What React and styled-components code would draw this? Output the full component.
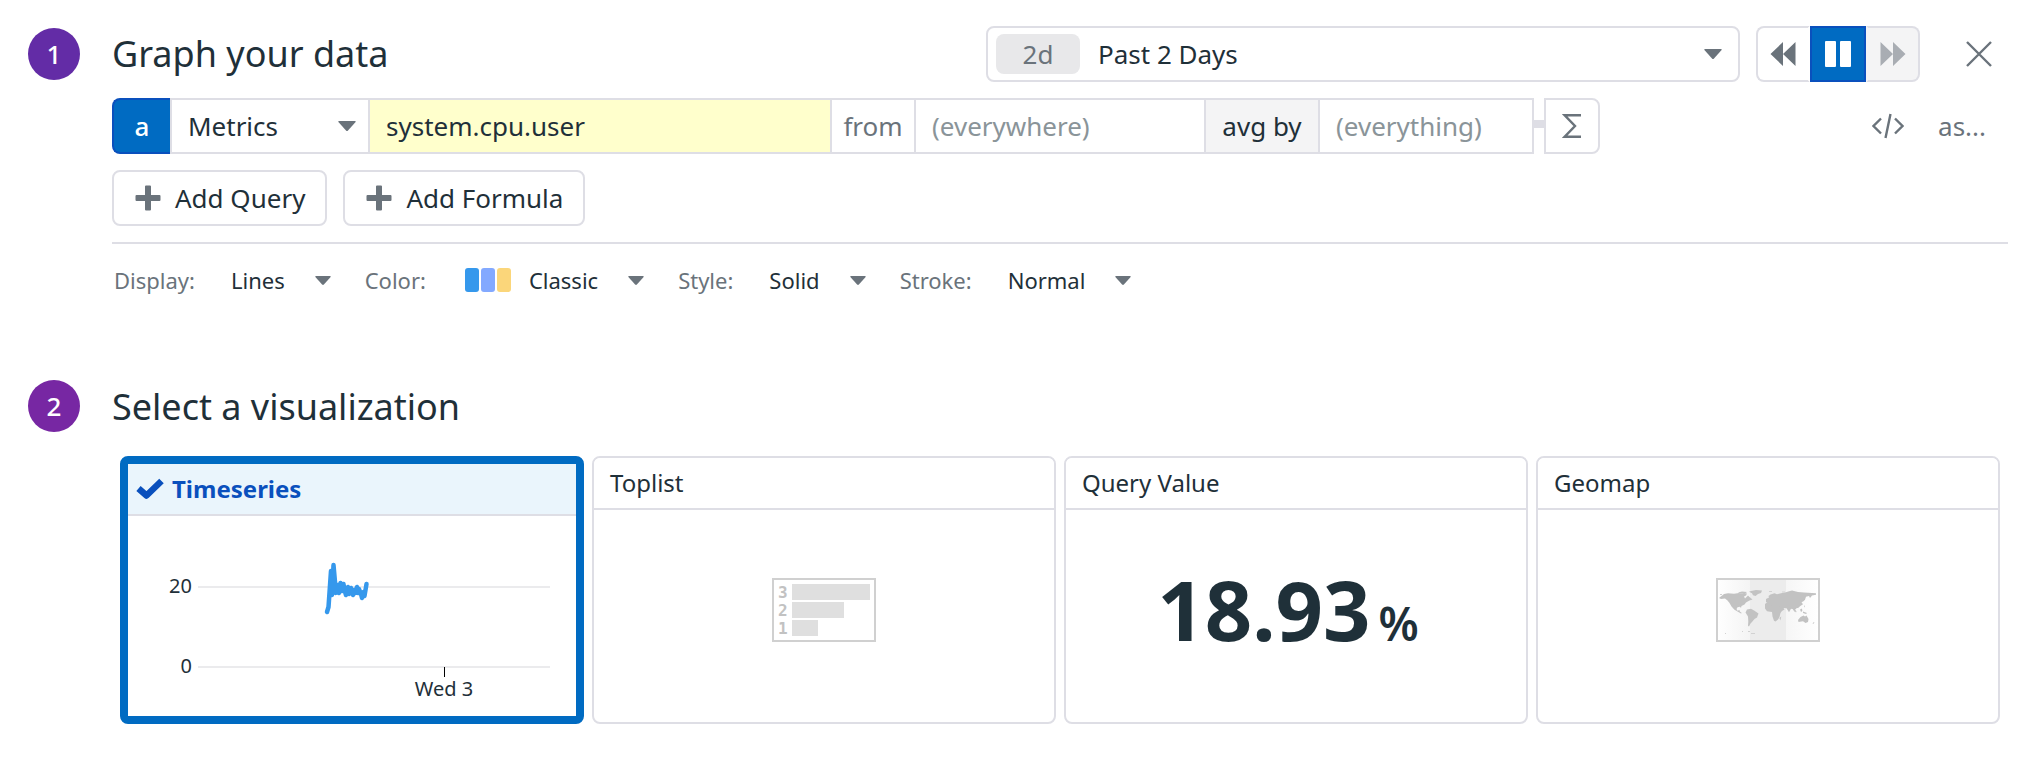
import React from "react";
import styled, { createGlobalStyle, css } from "styled-components";

const c = {
  text: "#1f3039",
  muted: "#6a737b",
  faint: "#8a9499",
  line: "#dedee5",
  blue: "#006bc2",
  deep: "#0a50bd",
  shade: "#f4f4f5",
};

const Global = createGlobalStyle`
  *, *::before, *::after { box-sizing: border-box; }
  body { margin: 0; background: #fff; }
  body, button, input, select { font-family: "Noto Sans", "Open Sans", sans-serif; color: ${c.text}; }
  svg { display: block; flex: none; }
`;

const Page = styled.main`
  padding: 26px 20px 40px 28px;
`;

const Section = styled.section`
  display: grid;
  grid-template-columns: 52px minmax(0, 1fr);
  column-gap: 32px;
  margin-bottom: ${(p) => (p.$spaced ? "60px" : "0")};
`;

const StepNumber = styled.span`
  display: flex;
  align-items: center;
  justify-content: center;
  width: 52px;
  height: 52px;
  margin-top: 2px;
  border-radius: 50%;
  background: ${(p) => p.$color};
  color: #fff;
  font-size: 26px;
  line-height: 36px;
  font-weight: 500;
`;

const Heading = styled.h2`
  margin: 0;
  font-size: 36px;
  line-height: 58px;
  font-weight: 400;
`;

const TopBar = styled.div`
  display: flex;
  align-items: center;
  height: 56px;
  margin-bottom: 16px;
`;

const TimeControls = styled.div`
  display: flex;
  align-items: center;
  margin-left: auto;
`;

const TimeBox = styled.label`
  display: flex;
  align-items: center;
  width: 754px;
  height: 56px;
  padding: 0 16px 0 8px;
  border: 2px solid ${c.line};
  border-radius: 8px;
`;

const TimeTag = styled.span`
  width: 84px;
  margin-right: 18px;
  border-radius: 8px;
  background: #e8e8ea;
  color: ${c.muted};
  font-size: 26px;
  line-height: 40px;
  text-align: center;
`;

const PlainSelect = styled.select`
  appearance: none;
  flex: 1;
  min-width: 0;
  padding: 0;
  border: 0;
  outline: 0;
  background: transparent;
  color: ${c.text};
  font-size: 26px;
  line-height: 36px;
`;

const Playback = styled.div`
  display: flex;
  margin: 0 36px 0 16px;
`;

const PlayButton = styled.button`
  display: flex;
  align-items: center;
  justify-content: center;
  width: ${(p) => (p.$active ? "56px" : "54px")};
  height: 56px;
  padding: 0;
  border: 2px solid ${(p) => (p.$active ? c.deep : c.line)};
  background: ${(p) => (p.$active ? c.blue : "#fff")};
  color: ${(p) => (p.$active ? "#fff" : c.muted)};
  &:first-child { border-right-color: #fff; border-radius: 8px 0 0 8px; }
  &:last-child { border-left-color: ${c.shade}; border-radius: 0 8px 8px 0; }
  &:disabled { background: ${c.shade}; color: #a9adb3; }
`;

const IconButton = styled.button`
  display: flex;
  align-items: center;
  justify-content: center;
  padding: 0 10px;
  border: 0;
  background: transparent;
  color: ${c.muted};
  font-size: 26px;
  line-height: 36px;
`;

const CloseButton = styled(IconButton)`
  margin-right: 6px;
`;

const QueryRow = styled.div`
  display: flex;
  align-items: center;
  margin-bottom: 16px;
`;

const cell = css`
  height: 56px;
  border: 2px solid ${c.line};
  border-right-width: 0;
  font-size: 26px;
  line-height: 36px;
`;

const QueryLetter = styled.button`
  ${cell}
  width: 58px;
  padding: 0;
  border-color: ${c.deep};
  border-radius: 8px 0 0 8px;
  background: ${c.blue};
  color: #fff;
  font-weight: 500;
`;

const SourceBox = styled.label`
  ${cell}
  display: flex;
  align-items: center;
  width: 198px;
  padding: 0 12px 0 16px;
`;

const MetricInput = styled.input`
  ${cell}
  width: 462px;
  padding: 0 16px;
  outline: 0;
  background: #ffffcc;
`;

const Joiner = styled.label`
  ${cell}
  display: flex;
  align-items: center;
  justify-content: center;
  width: 84px;
  color: ${c.muted};
`;

const AggregateButton = styled.button`
  ${cell}
  width: 114px;
  padding: 0;
  background: ${c.shade};
`;

const ScopeInput = styled.input`
  ${cell}
  width: ${(p) => (p.$wide ? "290px" : "216px")};
  padding: 0 16px;
  outline: 0;
  ${(p) => !p.$wide && css`border-right-width: 2px;`}
  &::placeholder { color: ${c.faint}; opacity: 1; }
`;

const Connector = styled.span`
  width: 10px;
  height: 8px;
  margin-bottom: 4px;
  background: ${c.line};
`;

const SigmaButton = styled.button`
  display: flex;
  align-items: center;
  justify-content: center;
  width: 56px;
  height: 56px;
  padding: 0;
  border: 2px solid ${c.line};
  border-radius: 0 8px 8px 0;
  background: #fff;
  color: ${c.muted};
`;

const QueryTools = styled.div`
  display: flex;
  align-items: center;
  gap: 14px;
  margin-left: auto;
  padding-right: 12px;
`;

const AddRow = styled.div`
  display: flex;
  gap: 16px;
  padding-bottom: 16px;
  border-bottom: 2px solid ${c.line};
`;

const AddButton = styled.button`
  display: flex;
  align-items: center;
  gap: 14px;
  height: 56px;
  padding: 0 20px 0 21px;
  border: 2px solid ${c.line};
  border-radius: 8px;
  background: #fff;
  font-size: 26px;
  line-height: 36px;
  svg { color: ${c.muted}; }
`;

const DisplayRow = styled.div`
  display: flex;
  align-items: center;
  gap: 34px;
  padding: 19px 2px 21px;
  font-size: 22px;
  line-height: 34px;
`;

const Option = styled.label`
  display: flex;
  align-items: center;
  color: ${c.muted};
`;

const OptionSelect = styled.select`
  appearance: none;
  field-sizing: content;
  margin: 0 30px 0 ${(p) => (p.$swatch ? "18px" : "36px")};
  padding: 0;
  border: 0;
  outline: 0;
  background: transparent;
  color: ${c.text};
  font-size: 22px;
  line-height: 34px;
`;

const Swatches = styled.span`
  display: flex;
  gap: 2px;
  margin-left: 39px;
`;

const Swatch = styled.span`
  width: 14px;
  height: 24px;
  border-radius: 3px;
  background: ${(p) => p.$color};
`;

const Cards = styled.div`
  display: grid;
  grid-template-columns: repeat(4, minmax(0, 1fr));
  gap: 8px;
  padding: 20px 8px 0;
`;

const Card = styled.article`
  display: flex;
  flex-direction: column;
  height: 268px;
  border: ${(p) => (p.$selected ? `8px solid ${c.blue}` : `2px solid ${c.line}`)};
  border-radius: 8px;
`;

const CardTitle = styled.button`
  display: flex;
  flex: none;
  align-items: center;
  gap: 8px;
  height: 52px;
  padding: ${(p) => (p.$selected ? "0 8px" : "0 16px")};
  border: 0;
  border-bottom: 2px solid ${c.line};
  border-radius: ${(p) => (p.$selected ? "0" : "6px 6px 0 0")};
  background: ${(p) => (p.$selected ? "#eaf5fc" : "#fff")};
  color: ${(p) => (p.$selected ? c.deep : c.text)};
  font-size: 24px;
  line-height: 34px;
  font-weight: ${(p) => (p.$selected ? 700 : 400)};
`;

const CardBody = styled.div`
  display: flex;
  flex: 1;
  align-items: center;
  justify-content: center;
  padding-bottom: ${(p) => (p.$flush ? "0" : "12px")};
`;

const BigValue = styled.div`
  display: flex;
  align-items: baseline;
  gap: 8px;
  padding: 12px 16px 0 0;
  font-size: 83px;
  line-height: 90px;
  font-weight: 700;
`;

const Unit = styled.span`
  font-size: 46px;
  font-weight: 600;
`;

const Caret = ({ size = 16 }) => (
  <svg width={size} height={size / 2 + 1} viewBox="0 0 18 10" fill={c.muted} aria-hidden="true">
    <path d="M1 0h16q1 0 .6 1L10 9.500q-1 1-2 0L.4 1Q0 0 1 0z" />
  </svg>
);

const PlusIcon = () => (
  <svg width="26" height="26" viewBox="0 0 26 26" fill="currentColor" aria-hidden="true">
    <path d="M10 1.500q0-1 1-1h4q1 0 1 1V10h8.500q1 0 1 1v4q0 1-1 1H16v8.500q0 1-1 1h-4q-1 0-1-1V16H1.500q-1 0-1-1v-4q0-1 1-1H10z" />
  </svg>
);

const RewindIcon = ({ flip }) => (
  <svg width="26" height="26" viewBox="0 0 26 26" fill="currentColor" aria-hidden="true">
    <path
      d={flip ? "M.5 1 13 13V1l12.500 12L13 25V13L.5 25z" : "M25.500 1 13 13V1L.5 13 13 25V13l12.500 12z"}
    />
  </svg>
);

const PauseIcon = () => (
  <svg width="26" height="26" viewBox="0 0 26 26" fill="currentColor" aria-hidden="true">
    <rect width="11" height="26" rx="1" />
    <rect x="15" width="11" height="26" rx="1" />
  </svg>
);

const CloseIcon = () => (
  <svg width="26" height="26" viewBox="0 0 26 26" stroke="currentColor" strokeWidth="2.400" aria-hidden="true">
    <path d="M1 1l24 24M25 1L1 25" />
  </svg>
);

const SigmaIcon = () => (
  <svg width="20" height="24" viewBox="0 0 20 24" fill="none" stroke="currentColor" strokeWidth="2.400" aria-hidden="true">
    <path d="M19 1.200H2.500L13 12 2.500 22.800H19" />
  </svg>
);

const CodeIcon = () => (
  <svg width="32" height="26" viewBox="0 0 32 26" fill="none" stroke="currentColor" strokeWidth="2.400" aria-hidden="true">
    <path d="M9 5.500 1.500 13 9 20.500M23 5.500l7.500 7.500L23 20.500M18.500 1l-5 24" />
  </svg>
);

const CheckIcon = () => (
  <svg width="28" height="24" viewBox="0 0 28 24" fill="none" stroke="currentColor" strokeWidth="6.500" strokeLinejoin="round" aria-hidden="true">
    <path d="M2.500 11.500 10.500 18.500 25.500 4" />
  </svg>
);

const TimeseriesChart = () => (
  <svg width="448" height="200" viewBox="0 0 448 200" aria-label="Timeseries preview">
    <g stroke="#ebebed" strokeWidth="2">
      <path d="M70 71H422M70 151H422" />
    </g>
    <path d="M316.500 151v10" stroke="#000" strokeWidth="1" />
    <g fill={c.text} fontSize="20" fontFamily="Noto Sans, sans-serif">
      <text x="64" y="77" textAnchor="end">20</text>
      <text x="64" y="157" textAnchor="end">0</text>
      <text x="316" y="180" textAnchor="middle">Wed 3</text>
    </g>
    <path
      d="M199 96l1.500-5L203 55l1 24L205.500 49 207 66l.5 11 2-8 1.500 8 1.500-10 1.500 8 1.500-7 1 6 1.500 5 2-8 1 7 2-6 2 7 1-5 1 3 2-6 1 6 1-4 2 5 1 4 1.500-6 1 4 2-12"
      fill="none"
      stroke="#3598ec"
      strokeWidth="4.500"
      strokeLinecap="round"
      strokeLinejoin="round"
    />
  </svg>
);

const ToplistPreview = () => (
  <svg width="104" height="64" viewBox="0 0 104 64" aria-label="Toplist preview">
    <rect x="1" y="1" width="102" height="62" fill="#fff" stroke="#d0d0d0" strokeWidth="2" />
    <g fill="#dfdfdf">
      <rect x="20" y="6" width="78" height="16" />
      <rect x="20" y="24" width="52" height="16" />
      <rect x="20" y="42" width="26" height="16" />
    </g>
    <g fill="#c2c2c2" fontSize="16" fontWeight="700" fontFamily="DejaVu Sans Mono, monospace">
      <text x="6" y="20">3</text>
      <text x="6" y="38">2</text>
      <text x="6" y="56">1</text>
    </g>
  </svg>
);

const GeomapPreview = () => (
  <svg width="104" height="64" viewBox="0 0 104 64" aria-label="Geomap preview">
    <defs>
      <linearGradient id="west">
        <stop offset="0" stopColor="#fff" />
        <stop offset="1" stopColor="#f4f4f4" />
      </linearGradient>
      <linearGradient id="east">
        <stop offset="0" stopColor="#f6f6f6" />
        <stop offset="1" stopColor="#fff" />
      </linearGradient>
    </defs>
    <rect x="1" y="1" width="33" height="62" fill="url(#west)" />
    <rect x="34" y="1" width="36" height="62" fill="#ececec" />
    <rect x="70" y="1" width="33" height="62" fill="url(#east)" />
    <g fill="#c2c2c2">
      <path d="M8 16l4-.8 6 .6 5-.8 3 .8 2-.8 3 .5-1 2-2 1 1 2 3-3 1.500 1.500 3 2.500-3 1-3.500 2-1.500 2-3 1.500-.5 2-1-1.300-2.500.5-1 1.800 1 1.700 2-.7.3 1.500 2 1.500-.8.5-3.500-2-3-1.700-3-3.300-2-3.500-2-2.500-2.500-2-4 .5-2-1z" />
      <path d="M22 14.500l4-1 5 .5-2 1.500-4 .3zM35 13l5-1 6 .5-1 2.500-3 1-2.500 2-2.500-.8-1-2-3-1.500z" />
      <path d="M31 31.500l4-.7 3.500 2 4 2.700-1.500 4-2.500 1.500-2.500 3-1.500 1.500-1.500 3-1-.7.3-4.300-.3-5-2.500-4z" />
      <path d="M49 26l2-1.500 5-.5 5 1 2 .8 2 4.200 2.500.5-3 4.500-1 4-1.500 2.500-2.500 2-1.500-.7-1.500-4.300-.5-4.500-5-.7-2-2.800z" />
      <path d="M50 24v-3l3-1.500-.5-1.500 2-1.500 4-1.300 2.500 1 4-.9 4-.8 5-1.500 2-.5 6 1.500 6 .5 12 .8v1.400l-4 .8-2 2.500-1-2-3 .8-1 3-1.500 1.500-2 1 1.500 2-3 2-1.500 1.500-2 .5-1.500 1.500-.5 2.500-1.500-3-2-.5-2 3.500-2.500-4-3-.3 1 1.600-3.500 2-2-3.500.5-2-3 .5-2-2-3 1z" />
      <path d="M82 42l2.500-3 3-1.500 1.500 1 1.500-1 2 3.500-.5 3-2.500 1-2.500-1.800-4.500.8zM78 30l2.500 3.500-.5 1-3-3.500zM84 31.500l2-1 .3 2.500-1.300 1zM63.500 40l1.800-1.500-1 4zM87 33.500l4 1.500-1 1-3-1zM88 27l.8 1.500-.8 1z" />
    </g>
    <path d="M4 16.500h2M26 53.500h1M35 55.500h4M32 53.500h2M9 55.500h1M97 46l1-2M53 13.500h3M66 14h3" stroke="#d2d2d2" />
    <rect x="1" y="1" width="102" height="62" fill="none" stroke="#d0d0d0" strokeWidth="2" />
  </svg>
);

const swatchColors = ["#3598ec", "#83a9ff", "#fbd67a"];

const displayOptions = [
  { label: "Display:", value: "Lines" },
  { label: "Color:", value: "Classic", swatch: true },
  { label: "Style:", value: "Solid" },
  { label: "Stroke:", value: "Normal" },
];

const visualizations = [
  { name: "Timeseries", selected: true, preview: <TimeseriesChart /> },
  { name: "Toplist", preview: <ToplistPreview /> },
  {
    name: "Query Value",
    preview: (
      <BigValue>
        18.93<Unit>%</Unit>
      </BigValue>
    ),
  },
  { name: "Geomap", preview: <GeomapPreview /> },
];

export default function App() {
  return (
    <Page>
      <Global />
      <Section $spaced>
        <StepNumber $color="#632ca6">1</StepNumber>
        <div>
          <TopBar>
            <Heading>Graph your data</Heading>
            <TimeControls>
              <TimeBox>
                <TimeTag>2d</TimeTag>
                <PlainSelect aria-label="Time range">
                  <option>Past 2 Days</option>
                </PlainSelect>
                <Caret size={18} />
              </TimeBox>
              <Playback>
                <PlayButton aria-label="Back"><RewindIcon /></PlayButton>
                <PlayButton aria-label="Pause" $active><PauseIcon /></PlayButton>
                <PlayButton aria-label="Forward" disabled><RewindIcon flip /></PlayButton>
              </Playback>
              <CloseButton aria-label="Close"><CloseIcon /></CloseButton>
            </TimeControls>
          </TopBar>
          <QueryRow>
            <QueryLetter>a</QueryLetter>
            <SourceBox>
              <PlainSelect aria-label="Data source">
                <option>Metrics</option>
              </PlainSelect>
              <Caret size={18} />
            </SourceBox>
            <MetricInput aria-label="Metric" defaultValue="system.cpu.user" />
            <Joiner htmlFor="scope">from</Joiner>
            <ScopeInput id="scope" placeholder="(everywhere)" $wide />
            <AggregateButton>avg by</AggregateButton>
            <ScopeInput aria-label="Group by" placeholder="(everything)" />
            <Connector />
            <SigmaButton aria-label="Add function"><SigmaIcon /></SigmaButton>
            <QueryTools>
              <IconButton aria-label="Edit as code"><CodeIcon /></IconButton>
              <IconButton>as...</IconButton>
            </QueryTools>
          </QueryRow>
          <AddRow>
            <AddButton><PlusIcon />Add Query</AddButton>
            <AddButton><PlusIcon />Add Formula</AddButton>
          </AddRow>
          <DisplayRow>
            {displayOptions.map((o) => (
              <Option key={o.label}>
                {o.label}
                {o.swatch && (
                  <Swatches>
                    {swatchColors.map((s) => <Swatch key={s} $color={s} />)}
                  </Swatches>
                )}
                <OptionSelect $swatch={o.swatch}>
                  <option>{o.value}</option>
                </OptionSelect>
                <Caret />
              </Option>
            ))}
          </DisplayRow>
        </div>
      </Section>
      <Section>
        <StepNumber $color="#7727a3">2</StepNumber>
        <div>
          <Heading>Select a visualization</Heading>
          <Cards>
            {visualizations.map((v) => (
              <Card key={v.name} $selected={v.selected}>
                <CardTitle $selected={v.selected}>
                  {v.selected && <CheckIcon />}
                  {v.name}
                </CardTitle>
                <CardBody $flush={v.selected}>{v.preview}</CardBody>
              </Card>
            ))}
          </Cards>
        </div>
      </Section>
    </Page>
  );
}
